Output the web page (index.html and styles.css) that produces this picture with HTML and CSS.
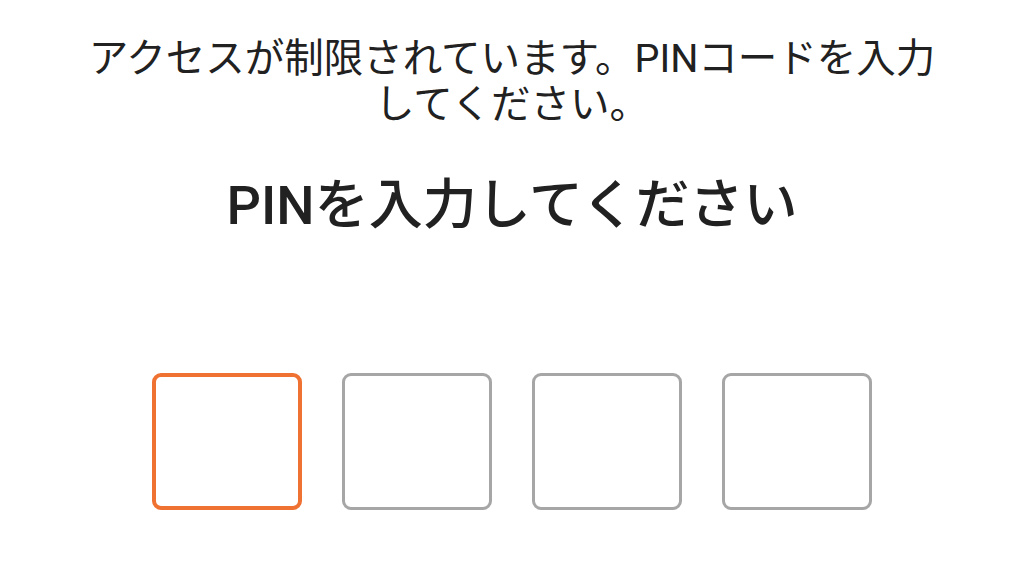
FILE: index.html
```html
<!DOCTYPE html>
<html lang="ja">
<head>
<meta charset="utf-8">
<link rel="stylesheet" href="styles.css">
</head>
<body>
<main class="screen">
  <p class="notice">アクセスが制限されています。PINコードを入力してください。</p>
  <h1 class="title">PINを入力してください</h1>
  <div class="pin">
    <div class="cell active"></div>
    <div class="cell"></div>
    <div class="cell"></div>
    <div class="cell"></div>
  </div>
</main>
</body>
</html>
```
FILE: styles.css
```css
html, body {
  margin: 0;
  padding: 0;
  background: #ffffff;
}
.screen {
  width: 1024px;
  height: 585px;
  box-sizing: border-box;
  padding-top: 36px;
  display: flex;
  flex-direction: column;
  align-items: center;
  font-family: Roboto, "Noto Sans CJK JP", sans-serif;
  color: #212121;
}
.notice {
  margin: 0;
  width: 870px;
  font-size: 39.5px;
  line-height: 46px;
  text-align: center;
  font-weight: 400;
}
.title {
  margin: 47px 0 0;
  font-size: 54px;
  line-height: 62px;
  font-weight: 500;
  text-align: center;
}
.pin {
  margin-top: 136px;
  display: flex;
  gap: 40px;
}
.cell {
  width: 150px;
  height: 137px;
  box-sizing: border-box;
  border: 3px solid #a6a6a6;
  border-radius: 9px;
}
.cell.active {
  border: 4px solid #f07232;
}
```
